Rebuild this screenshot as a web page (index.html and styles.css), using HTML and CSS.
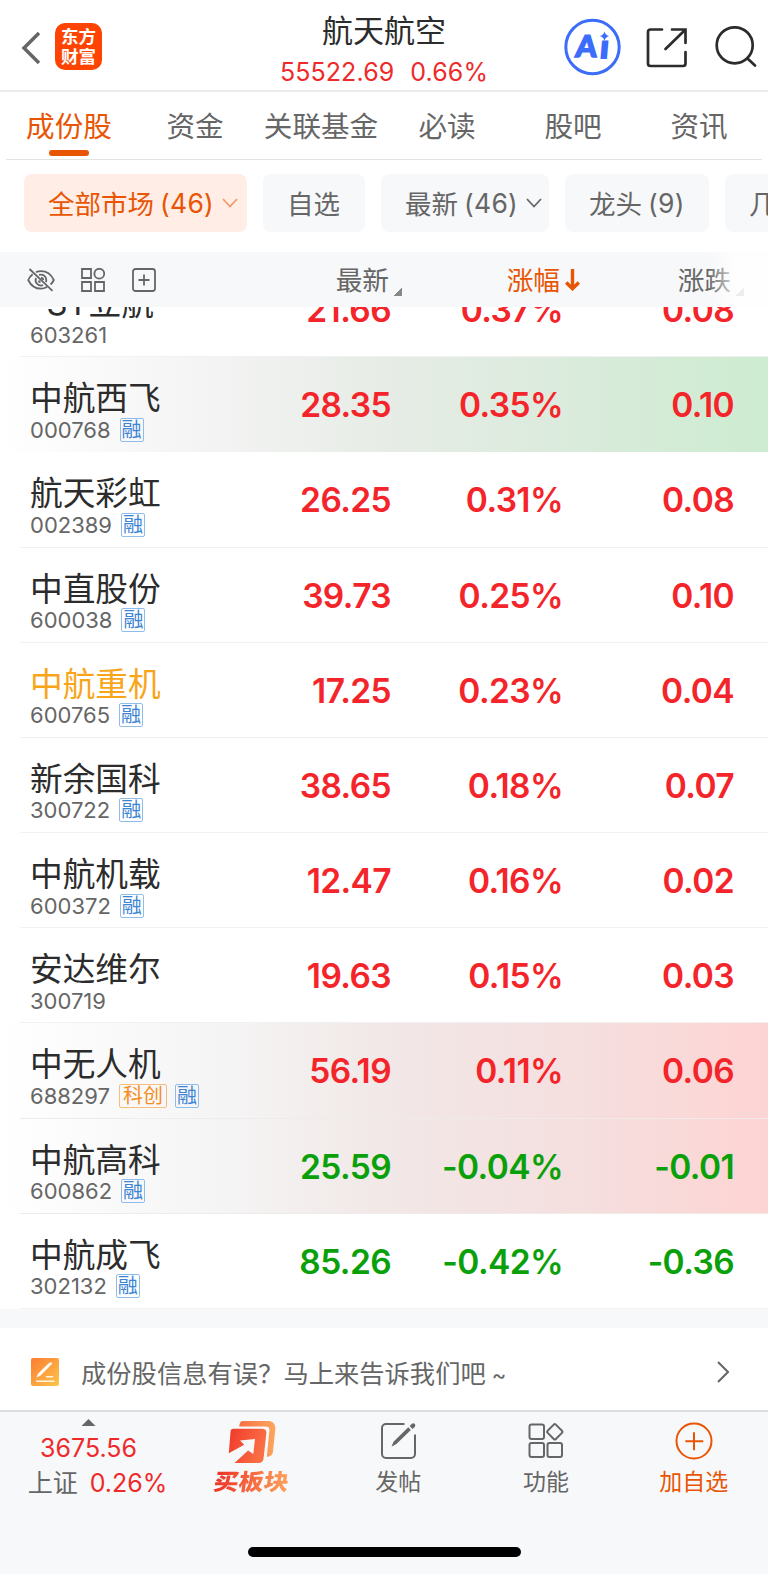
FILE: index.html
```html
<!DOCTYPE html>
<html lang="zh-CN">
<head>
    <meta charset="UTF-8">
    <meta name="viewport" content="width=device-width, initial-scale=1.0">
    <title>航天航空</title>
    <link rel="stylesheet" href="styles.css">
</head>
<body>

    <!-- 顶部标题栏 -->
    <header class="header">
        <div class="header-left">
            <svg class="back" width="20" height="34" viewBox="0 0 20 34"><path d="M18 2 3 17l15 15"/></svg>
            <div class="logo">东方<br>财富</div>
        </div>
        <div class="header-title">
            <h1>航天航空</h1>
            <p><span>55522.69</span><span>0.66%</span></p>
        </div>
        <div class="header-right">
            <svg class="ai" width="58" height="58" viewBox="0 0 58 58">
                <circle cx="29.500" cy="29" r="26.700"/>
                <g transform="skewX(-5)">
                    <text x="15.500" y="39" class="ai-a">A</text>
                    <text x="40" y="40.500" class="ai-i">ı</text>
                </g>
                <path d="M41.500 13.500q1 3.600 4.600 4.600-3.600 1-4.600 4.600-1-3.600-4.600-4.600 3.600-1 4.600-4.600z"/>
            </svg>
            <svg class="line-icon share" width="42" height="42" viewBox="0 0 42 42">
                <path d="M16 2.500H4.500a2.500 2.500 0 0 0-2.500 2.500V36.500A2.500 2.500 0 0 0 4.500 39H37a2.500 2.500 0 0 0 2.500-2.500V25M26 2.500H39.500V16M39 3 19.500 22"/>
            </svg>
            <svg class="line-icon search" width="42" height="42" viewBox="0 0 42 42">
                <circle cx="19.700" cy="19.300" r="18"/><path d="m32.500 32.500 7.500 7"/>
            </svg>
        </div>
    </header>

    <!-- 标签页 -->
    <nav class="tabs">
        <a class="tab active">成份股</a>
        <a class="tab">资金</a>
        <a class="tab">关联基金</a>
        <a class="tab">必读</a>
        <a class="tab">股吧</a>
        <a class="tab">资讯</a>
    </nav>

    <!-- 筛选 -->
    <div class="filters">
        <div class="chip chip-all active">全部市场<span>(46)</span><svg width="16" height="10" viewBox="0 0 16 10"><path d="m1 1 7 7.500L15 1"/></svg></div>
        <div class="chip chip-own">自选</div>
        <div class="chip chip-new">最新<span>(46)</span><svg width="16" height="10" viewBox="0 0 16 10"><path d="m1 1 7 7.500L15 1"/></svg></div>
        <div class="chip chip-lead">龙头<span>(9)</span></div>
        <div class="chip chip-more">几天几板</div>
    </div>

    <!-- 表头 -->
    <div class="table-head">
        <div class="tools">
            <svg width="28" height="24" viewBox="0 0 28 24"><path d="M9 4.200A14 14 0 0 1 14 3.200c6 0 10.500 4 12.800 8.800-.8 1.700-1.900 3.200-3.200 4.500M20 19c-1.800 1-3.800 1.700-6 1.700C8 20.700 3.500 16.800 1.200 12c1-2.200 2.500-4.100 4.400-5.700M12 6.900a5.500 5.500 0 0 1 7.300 5.100c0 .8-.1 1.500-.4 2.100M16 17.200A5.500 5.500 0 0 1 9 10M14 9.800a2.300 2.300 0 0 1 2.300 2.200M13.500 14.300a2.300 2.300 0 0 1-1.800-1.800M2.500 1 25.500 22.800"/></svg>
            <svg width="24" height="24" viewBox="0 0 24 24"><path d="M1 1h9v9H1zM1 14h9v9H1zM14 14h9v9h-9z"/><circle cx="18.300" cy="5.700" r="4.900"/></svg>
            <svg width="24" height="24" viewBox="0 0 24 24"><rect x="1" y="1" width="22" height="22" rx="2.500"/><path d="M12 6.500v11M6.500 12h11"/></svg>
        </div>
        <div class="th">最新<i class="corner"></i></div>
        <div class="th sorted">涨幅<svg width="15" height="22" viewBox="0 0 15 22"><path d="M7.500 0v19M1.200 13.500l6.300 6.200 6.300-6.200"/></svg></div>
        <div class="th">涨跌<i class="corner"></i></div>
        <div class="head-fade"></div>
    </div>

    <!-- 股票列表 -->
    <main class="stock-list">
        <div class="row up">
            <div class="stock"><h2>*ST立航</h2><p>603261</p></div>
            <b>21.66</b><b>0.37%</b><b>0.08</b>
        </div>
        <div class="row up flash-green">
            <div class="stock"><h2>中航西飞</h2><p>000768<em>融</em></p></div>
            <b>28.35</b><b>0.35%</b><b>0.10</b>
        </div>
        <div class="row up">
            <div class="stock"><h2>航天彩虹</h2><p>002389<em>融</em></p></div>
            <b>26.25</b><b>0.31%</b><b>0.08</b>
        </div>
        <div class="row up">
            <div class="stock"><h2>中直股份</h2><p>600038<em>融</em></p></div>
            <b>39.73</b><b>0.25%</b><b>0.10</b>
        </div>
        <div class="row up">
            <div class="stock"><h2 class="own">中航重机</h2><p>600765<em>融</em></p></div>
            <b>17.25</b><b>0.23%</b><b>0.04</b>
        </div>
        <div class="row up">
            <div class="stock"><h2>新余国科</h2><p>300722<em>融</em></p></div>
            <b>38.65</b><b>0.18%</b><b>0.07</b>
        </div>
        <div class="row up">
            <div class="stock"><h2>中航机载</h2><p>600372<em>融</em></p></div>
            <b>12.47</b><b>0.16%</b><b>0.02</b>
        </div>
        <div class="row up">
            <div class="stock"><h2>安达维尔</h2><p>300719</p></div>
            <b>19.63</b><b>0.15%</b><b>0.03</b>
        </div>
        <div class="row up flash-red">
            <div class="stock"><h2>中无人机</h2><p>688297<em class="kc">科创</em><em>融</em></p></div>
            <b>56.19</b><b>0.11%</b><b>0.06</b>
        </div>
        <div class="row down flash-red">
            <div class="stock"><h2>中航高科</h2><p>600862<em>融</em></p></div>
            <b>25.59</b><b>-0.04%</b><b>-0.01</b>
        </div>
        <div class="row down">
            <div class="stock"><h2>中航成飞</h2><p>302132<em>融</em></p></div>
            <b>85.26</b><b>-0.42%</b><b>-0.36</b>
        </div>
    </main>

    <!-- 纠错入口 -->
    <div class="feedback">
        <svg width="28" height="28" viewBox="0 0 28 28">
            <defs><linearGradient id="note" x1="0" y1="0" x2="1" y2="1"><stop offset="0" stop-color="#fb7d32"/><stop offset="1" stop-color="#fec54a"/></linearGradient></defs>
            <rect width="28" height="28" rx="2" fill="url(#note)"/>
            <path d="M5 23.200h18.500M15 18.700h7" stroke="#fff" stroke-width="1.500" opacity=".85"/>
            <path d="m5.500 19.500 1.700-4L17.700 5.300l2 1.900L9.300 17.800z" fill="#fff"/><circle cx="19.700" cy="5.600" r="1.300" fill="#fff"/>
        </svg>
        <span>成份股信息有误？马上来告诉我们吧<i>~</i></span>
        <svg class="arrow" width="12" height="22" viewBox="0 0 12 22"><path d="m1 1 10 10L1 21"/></svg>
    </div>

    <!-- 底部栏 -->
    <footer class="bottom-bar">
        <div class="index">
            <i class="triangle"></i>
            <strong>3675.56</strong>
            <p>上证<strong>0.26%</strong></p>
        </div>
        <div class="action buy">
            <svg width="48" height="44" viewBox="0 0 48 44">
                <defs>
                    <linearGradient id="front" x1="0" y1="0" x2="1" y2=".3"><stop offset="0" stop-color="#f0382b"/><stop offset="1" stop-color="#fa7045"/></linearGradient>
                    <linearGradient id="back" x1="0" y1="0" x2="1" y2="0"><stop offset="0" stop-color="#f87043"/><stop offset="1" stop-color="#fda65c"/></linearGradient>
                </defs>
                <path d="M15 1h24c6 0 8.800 3 8.300 8.500l-2.300 22c-.3 3.500-2.600 5-6.200 5.300l2.600-25.800c.3-3.600-.8-4.500-4-4.500H11.200c.2-3.500 1.300-5.500 3.800-5.500z" fill="url(#back)"/>
                <path d="M5.500 8.800h28.300c3.700 0 4.900 1.700 4.500 5l-2.800 25c-.3 2.700-1.900 4.200-5 4.200H6.500l13.600-12.500 5.200 3.500L27 19l-15 1.500 4.200 4.200L.8 33.200 2.500 12c.2-2.200 1-3.200 3-3.200z" fill="url(#front)"/>
            </svg>
            <span>买板块</span>
        </div>
        <div class="action">
            <svg width="36" height="36" viewBox="0 0 36 36"><path d="M23.500 1H5a4 4 0 0 0-4 4v26a4 4 0 0 0 4 4h25a4 4 0 0 0 4-4V11.500"/><path class="pen" d="m10.500 23.800 2-5L27.300 4.300l2.600 2.600-14.500 14.200zM28.700 3l2-2c1-.9 2.300-.9 3 0 .8.800.8 2 0 2.900l-2.200 2z"/></svg>
            <span>发帖</span>
        </div>
        <div class="action">
            <svg width="36" height="36" viewBox="0 0 36 36"><rect x="1.500" y="1.500" width="14.500" height="14.500" rx="2"/><rect x="1.500" y="20" width="14.500" height="14" rx="2"/><rect x="19.500" y="20" width="14.500" height="14" rx="2"/><rect x="21" y="3" width="11.600" height="11.600" rx="1.500" transform="rotate(45 26.800 8.800)"/></svg>
            <span>功能</span>
        </div>
        <div class="action add">
            <svg width="38" height="38" viewBox="0 0 38 38"><circle cx="19" cy="19" r="17.500"/><path d="M19 10.300v18M10.300 19.300h18"/></svg>
            <span>加自选</span>
        </div>
        <div class="home-indicator"></div>
    </footer>

</body>
</html>
```

FILE: styles.css
```css
* {
    margin: 0;
    padding: 0;
    box-sizing: border-box;
}

body {
    width: 768px;
    height: 1574px;
    overflow: hidden;
    background: #fff;
    color: #666;
    font-family: Inter, "Noto Sans CJK SC", sans-serif;
}

svg {
    display: block;
    flex: none;
    fill: none;
}

i, em {
    font-style: normal;
}

/* 顶部标题栏 */
.header {
    display: grid;
    grid-template-columns: 230px 1fr 230px;
    height: 92px;
    border-bottom: 2px solid #ebebeb;
}

.header-left {
    display: flex;
    align-items: flex-start;
    gap: 14px;
    padding: 23px 0 0 21px;
}

.back {
    margin-top: 8px;
    stroke: #666;
    stroke-width: 3.5;
}

.logo {
    width: 47px;
    height: 47px;
    padding-top: 4px;
    border-radius: 10px;
    background: #fe4400;
    color: #fff;
    font-size: 17.5px;
    font-weight: 700;
    line-height: 19.5px;
    text-align: center;
}

.header-title {
    text-align: center;
}

.header-title h1 {
    padding-top: 9px;
    color: #2c2c2c;
    font-size: 31px;
    font-weight: 400;
    line-height: 44px;
}

.header-title p {
    display: flex;
    justify-content: center;
    gap: 16px;
    color: #ee2a2a;
    font-size: 25px;
    letter-spacing: .1px;
    line-height: 38px;
}

.header-right {
    display: flex;
    align-items: flex-start;
    padding-left: 25px;
}

.ai {
    margin-top: 18px;
}

.ai circle {
    stroke: #3c6cfa;
    stroke-width: 3;
}

.ai text, .ai path {
    fill: #3c6cfa;
    font-family: Lato, sans-serif;
    font-weight: 900;
}

.ai-a {
    font-size: 30px;
    stroke: #3c6cfa;
    stroke-width: 1.5px;
}

.ai-i {
    font-size: 32px;
    stroke: #3c6cfa;
    stroke-width: 2px;
}

.line-icon {
    stroke: #2c2c2c;
    stroke-width: 2.7;
    stroke-linecap: round;
}

.share {
    margin: 27px 0 0 25px;
}

.search {
    margin: 26px 0 0 27px;
}

/* 标签页 */
.tabs {
    display: grid;
    grid-template-columns: repeat(6, 1fr);
    height: 68px;
    margin: 0 6px;
    border-bottom: 1px solid #e2e2e2;
}

.tab {
    display: flex;
    flex-direction: column;
    align-items: center;
    padding-top: 6px;
    font-size: 28.6px;
    line-height: 58px;
    white-space: nowrap;
}

.tab.active {
    color: #e85504;
}

.tab.active::after {
    content: "";
    width: 40px;
    height: 6px;
    margin-top: -6px;
    border-radius: 3px;
    background: #e85504;
}

/* 筛选 */
.filters {
    display: flex;
    gap: 16px;
    height: 92px;
    padding: 14px 0 0 24px;
    overflow: hidden;
}

.chip {
    display: flex;
    flex: none;
    align-items: center;
    height: 58px;
    padding: 0 0 1px 24px;
    border-radius: 8px;
    background: #f7f8fa;
    font-size: 26.5px;
    white-space: nowrap;
}

.chip span {
    margin-left: 6px;
    font-size: 26.5px;
    letter-spacing: .3px;
}

.chip svg {
    margin-left: 8px;
    stroke: #666;
    stroke-width: 1.8;
}

.chip-all {
    width: 223px;
}

.chip-own {
    width: 102px;
}

.chip-new {
    width: 168px;
}

.chip-lead {
    width: 144px;
}

.chip.active {
    background: #ffede6;
    color: #e85504;
}

.chip.active svg {
    stroke: #f19a6b;
}

/* 表头 */
.table-head {
    position: relative;
    display: grid;
    grid-template-columns: 200px 162px 171px 171px;
    align-items: center;
    height: 55px;
    padding-left: 27px;
    background: #f7f8fa;
}

.tools {
    display: flex;
    gap: 26px;
}

.tools svg {
    stroke: #666;
    stroke-width: 1.8;
}

.tools svg:last-child {
    margin-left: 1px;
}

.th {
    display: flex;
    justify-content: flex-end;
    height: 55px;
    font-size: 26.7px;
    line-height: 56px;
}

.corner {
    align-self: flex-end;
    width: 8px;
    height: 8px;
    margin: 0 -13px 11px 5px;
    background: linear-gradient(135deg, transparent 50%, #888 50%);
}

.sorted {
    align-items: center;
    color: #e85504;
}

.sorted svg {
    margin: 0 -20px 0 5px;
    stroke: #e85504;
    stroke-width: 3.4;
}

/* 右侧渐隐, 盖住最后一列 */
.head-fade {
    position: absolute;
    top: 0;
    right: 0;
    width: 60px;
    height: 100%;
    background: linear-gradient(90deg, rgba(255, 255, 255, 0), #fff 50%);
    opacity: .85;
}

/* 股票列表 */
.stock-list {
    display: flex;
    flex-direction: column;
    justify-content: flex-end;
    height: 1002px;
    overflow: hidden;
}

.row {
    display: grid;
    flex: none;
    grid-template-columns: 201px 160px 172px 171px;
    height: 95.2px;
    padding-left: 30px;
    background: linear-gradient(#f1f1f1, #f1f1f1) 20px 100% / 100% 1px no-repeat;
}

.flash-green {
    background: linear-gradient(90deg, #fff, #f4f4f4 200px, #e7ece6 384px, #daebdc 576px, #cdecd0);
}

.flash-red {
    background: linear-gradient(#efebe9, #efebe9) 20px 100% / 100% 1px no-repeat, linear-gradient(90deg, #fff, #f5f4f4 230px, #f1e8e7 384px, #f5dfdf 576px, #fdd4d3);
}

.stock h2 {
    padding-top: 18px;
    color: #2c2c2c;
    font-size: 32.7px;
    font-weight: 400;
    line-height: 46px;
    white-space: nowrap;
}

.stock .own {
    color: #f9a51a;
}

.stock p {
    display: flex;
    align-items: center;
    height: 24px;
    margin-top: -3.4px;
    font-size: 22px;
    line-height: 24px;
}

.stock em {
    height: 24px;
    margin-left: 9px;
    padding: 0 1px;
    border: 1.5px solid #8fbdea;
    border-radius: 2px;
    color: #3c84d4;
    font-size: 20px;
    line-height: 22px;
}

.stock em + em {
    margin-left: 8px;
}

.stock .kc {
    padding: 0 3px;
    border-color: #f8bd7c;
    color: #f78c1e;
}

.row b {
    font-size: 33.5px;
    font-weight: 600;
    letter-spacing: -.6px;
    line-height: 96px;
    text-align: right;
}

.up b {
    color: #f4252a;
}

.down b {
    color: #0aa00a;
}

/* 纠错入口 */
.feedback {
    display: flex;
    align-items: center;
    height: 101px;
    padding: 6px 39px 0 31px;
    border-top: 19px solid #f7f8fa;
    font-size: 25.3px;
}

.feedback span {
    flex: 1;
    padding-left: 22px;
}

.feedback span i {
    margin-left: 6px;
    font-size: 22px;
}

.arrow {
    stroke: #666;
    stroke-width: 2;
}

/* 底部栏 */
.bottom-bar {
    display: grid;
    grid-template-columns: 177px repeat(4, 1fr);
    grid-template-rows: 135px 1fr;
    height: 164px;
    border-top: 2px solid #dddee4;
    background: #f7f8fa;
}

.index, .action {
    display: flex;
    flex-direction: column;
    align-items: center;
}

.triangle {
    width: 14px;
    height: 7px;
    margin-top: 7px;
    background: #666;
    clip-path: polygon(50% 0, 100% 100%, 0 100%);
}

.index strong {
    margin-top: 5px;
    color: #ee2a2a;
    font-size: 25px;
    font-weight: 400;
    line-height: 34px;
}

.index p {
    display: flex;
    gap: 12px;
    padding-left: 18px;
    font-size: 25px;
    line-height: 36px;
}

.index p strong {
    margin: 0;
    line-height: 36px;
}

.action {
    padding-top: 11px;
    font-size: 23px;
}

.action svg {
    height: 36px;
    stroke: #666;
    stroke-width: 2;
}

.action span {
    margin: 6px 1px 0 0;
    line-height: 34px;
}

.action .pen {
    fill: #666;
    stroke: none;
}

.buy {
    padding-top: 8px;
    padding-left: 2px;
}

.buy svg {
    height: 44px;
    stroke: none;
}

.buy span {
    margin: 1px 0 0;
    background: linear-gradient(90deg, #ee3026, #fda35b);
    background-clip: text;
    -webkit-background-clip: text;
    color: transparent;
    font-size: 25px;
    font-weight: 900;
    transform: skewX(-8deg) scaleY(.9);
}

.add {
    padding-top: 10px;
    color: #e85504;
}

.add svg {
    height: 38px;
    stroke: #e85504;
}

.add span {
    margin-top: 5px;
}

.home-indicator {
    grid-column: 1 / -1;
    justify-self: center;
    width: 273px;
    height: 10px;
    border-radius: 5px;
    background: #000;
}
```
